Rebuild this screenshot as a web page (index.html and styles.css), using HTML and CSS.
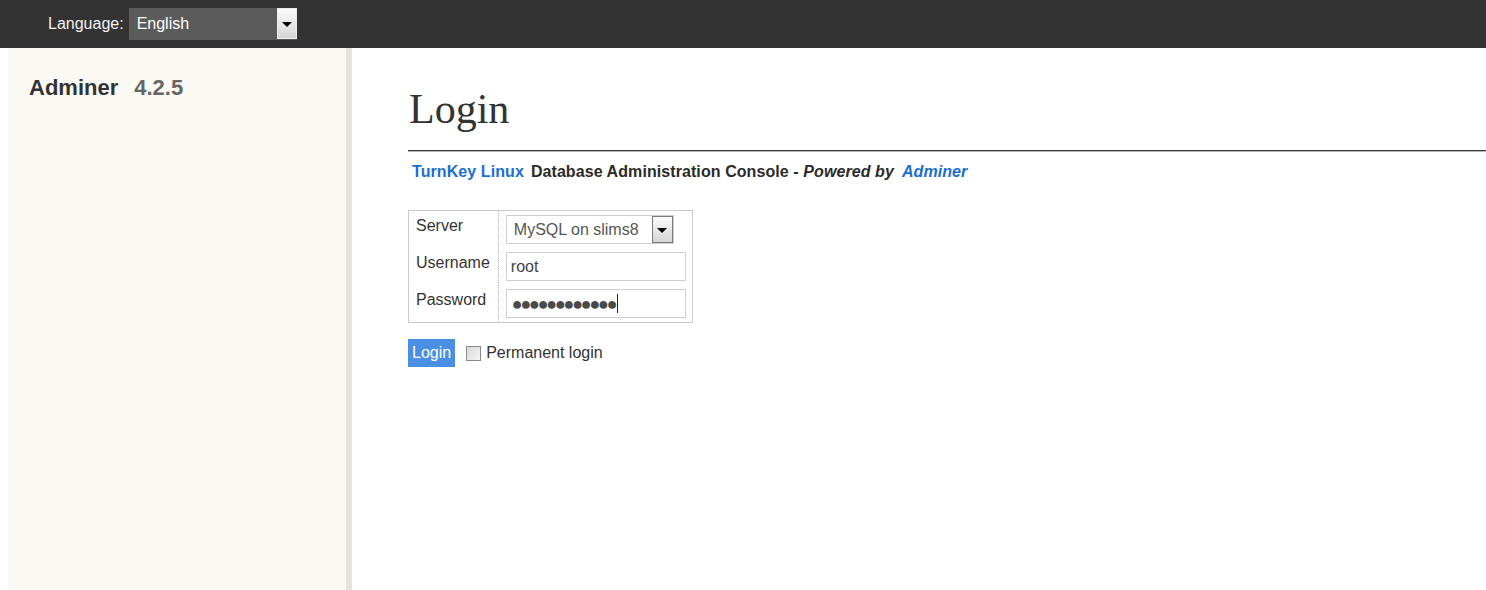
FILE: index.html
```html
<!DOCTYPE html>
<html>
<head>
<meta charset="utf-8">
<title>Login - Adminer</title>
<link rel="stylesheet" href="styles.css">
</head>
<body>
<div class="topbar">
  <span class="lang-label">Language:</span>
  <div class="dark-select">
    <span class="dark-select-text">English</span>
    <span class="arrow-box dark-arrow"><span class="tri"></span></span>
  </div>
</div>
<div class="layout">
  <aside class="sidebar">
    <h1 class="brand">Adminer<span class="version">4.2.5</span></h1>
  </aside>
  <main class="main">
    <h2 class="title">Login</h2>
    <p class="subtitle"><a class="link" href="#">TurnKey Linux</a><span class="plain">Database Administration Console - </span><em class="pow">Powered by</em><a class="link pow-link" href="#">Adminer</a></p>
    <table class="form">
      <tr>
        <th>Server</th>
        <td>
          <div class="light-select">
            <span class="light-select-text">MySQL on slims8</span>
            <span class="arrow-box light-arrow"><span class="tri"></span></span>
          </div>
        </td>
      </tr>
      <tr>
        <th>Username</th>
        <td><div class="field">root</div></td>
      </tr>
      <tr>
        <th>Password</th>
        <td><div class="field pass"><span class="dots">●●●●●●●●●●●●</span><span class="caret"></span></div></td>
      </tr>
    </table>
    <div class="actions">
      <span class="btn">Login</span>
      <span class="check"></span>
      <span class="check-label">Permanent login</span>
    </div>
  </main>
</div>
</body>
</html>
```
FILE: styles.css
```css
html, body {
  margin: 0;
  padding: 0;
  height: 100%;
}
body {
  font-family: "Liberation Sans", Arial, sans-serif;
  font-size: 16px;
  color: #333;
  background: #fff;
  overflow: hidden;
}
.topbar {
  height: 48px;
  background: #333;
  display: flex;
  align-items: center;
  padding-left: 48px;
  box-sizing: border-box;
}
.lang-label {
  color: #f2f2f2;
  margin-right: 5px;
  line-height: 20px;
}
.dark-select {
  width: 168px;
  height: 32px;
  background: #5b5b5b;
  display: flex;
  align-items: center;
  justify-content: space-between;
  margin-top: -1px;
}
.dark-select-text {
  color: #fff;
  padding-left: 8px;
}
.arrow-box {
  display: flex;
  align-items: center;
  justify-content: center;
  box-sizing: border-box;
  background: linear-gradient(#fbfbfb, #d6d6d6);
}
.dark-arrow {
  width: 20px;
  height: 31px;
  margin-right: 0;
  border: 1px solid #ededed;
}
.light-arrow {
  width: 21px;
  height: 27px;
  border: 1px solid #7a7a7a;
  margin-right: 0;
}
.tri {
  width: 0;
  height: 0;
  border-left: 5px solid transparent;
  border-right: 5px solid transparent;
  border-top: 5px solid #000;
  margin-top: 1px;
}
.layout {
  display: flex;
  height: calc(100% - 48px);
}
.sidebar {
  margin-left: 8px;
  width: 338px;
  background: #faf9f4;
  border-right: 6px solid #e6e3dd;
  flex-shrink: 0;
}
.brand {
  margin: 27px 0 0 21px;
  font-size: 22px;
  line-height: 26px;
  font-weight: bold;
  color: #333;
}
.version {
  color: #666;
  margin-left: 16px;
}
.main {
  flex: 1;
  padding-left: 56px;
}
.title {
  margin: 36px 0 0 0;
  font-family: "Liberation Serif", "Times New Roman", serif;
  font-weight: normal;
  font-size: 42px;
  line-height: 50px;
  color: #333;
  padding: 0 0 16px 1px;
  border-bottom: 1px solid #3c3c3c;
  box-shadow: 0 1px 0 #b5b5b5;
}
.subtitle {
  margin: 11px 0 0 4px;
  font-weight: bold;
  line-height: 20px;
  letter-spacing: 0.08px;
}
.link {
  color: #1a6fd4;
  text-decoration: none;
}
.plain {
  margin-left: 7px;
  color: #2b2b2b;
}
.pow {
  font-style: italic;
  color: #2b2b2b;
}
.pow-link {
  font-style: italic;
  margin-left: 8px;
}
.form {
  margin-top: 28px;
  border-collapse: collapse;
  border: 1px solid #cbcbcb;
}
.form th {
  text-align: left;
  font-weight: normal;
  vertical-align: top;
  padding: 4px 8px 4px 7px;
  line-height: 22px;
  width: 73px;
  border-right: 1px dotted #bbb;
  color: #333;
}
.form td {
  padding: 4px 6px 4px 7px;
}
.light-select {
  width: 168px;
  height: 29px;
  box-sizing: border-box;
  border: 1px solid #cfcfcf;
  display: flex;
  align-items: center;
  justify-content: space-between;
}
.light-select-text {
  color: #555;
  padding-left: 7px;
}
.field {
  width: 180px;
  height: 29px;
  box-sizing: border-box;
  border: 1px solid #cfcfcf;
  display: flex;
  align-items: center;
  padding-left: 4px;
  color: #444;
}
.dots {
  font-size: 18px;
  letter-spacing: -2.25px;
  color: #4a4a4a;
  padding-left: 1px;
  line-height: 20px;
}
.caret {
  width: 1px;
  height: 19px;
  background: #222;
  margin-left: 2px;
}
.actions {
  margin-top: 16px;
  display: flex;
  align-items: center;
}
.btn {
  background: #4a8fe3;
  color: #fff;
  height: 28px;
  line-height: 28px;
  padding: 0 4px;
}
.check {
  width: 15px;
  height: 15px;
  box-sizing: border-box;
  border: 1px solid #8a8a8a;
  background: linear-gradient(135deg, #d8d8d8, #f6f6f6);
  margin-left: 11px;
  margin-top: 1px;
}
.check-label {
  margin-left: 5px;
  color: #333;
}
```
